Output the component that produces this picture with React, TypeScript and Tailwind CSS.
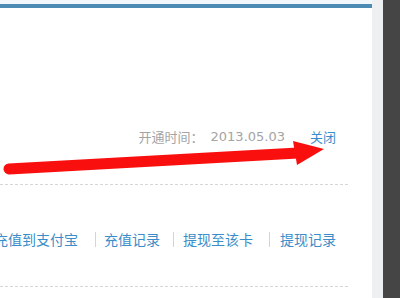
import React from 'react'

const cjk = '"Noto Sans CJK SC", sans-serif'

const links = [
  { label: '充值到支付宝', gap: '' },
  { label: '充值记录', gap: 'ml-[17px]' },
  { label: '提现至该卡', gap: 'ml-[13px]' },
  { label: '提现记录', gap: 'ml-[16px]' },
]

const after = ['ml-[8px]', 'ml-[9px]', 'ml-[10px]']

function Arrow() {
  return (
    <svg className="pointer-events-none absolute inset-0" width="400" height="298" viewBox="0 0 400 298" aria-hidden>
      <line x1="9" y1="169" x2="298" y2="153" stroke="#fa0f0f" strokeWidth="11" strokeLinecap="round" />
      <polygon points="293,141 324,149 297,165" fill="#fa0f0f" />
    </svg>
  )
}

export default function App() {
  return (
    <div className="relative flex h-[298px] w-[400px] overflow-hidden bg-white" style={{ fontFamily: cjk }}>
      <div className="flex w-[372px] flex-col">
        <div className="h-[4px] bg-[#f1f7fb]" />
        <div className="h-[4px] bg-[#4b8bb4]" />
        <div className="w-[348px]">
          <div className="h-[177px] border-b border-dashed border-[#d6d6d6] pt-[120px]">
            <div className="flex items-center justify-end pr-[12px] text-[13px] leading-[18px]">
              <span className="text-[#a4a4a4]">开通时间：</span>
              <span className="ml-[7px] text-[#a4a4a4]" style={{ fontFamily: '"DejaVu Sans", "Noto Sans CJK SC", sans-serif' }}>
                2013.05.03
              </span>
              <span className="ml-[25px] text-[#3a8dc8]">关闭</span>
            </div>
          </div>
          <div className="h-[102px] border-b border-dashed border-[#d6d6d6] pt-[44px]">
            <div className="ml-[-6px] flex items-center text-[14px] leading-[20px] text-[#3a8dc8]">
              {links.map((l, i) => (
                <React.Fragment key={l.label}>
                  {i > 0 ? <span className={`${l.gap} h-[15px] w-px bg-[#d4d4d4]`} /> : null}
                  <span className={i > 0 ? after[i - 1] : ''}>{l.label}</span>
                </React.Fragment>
              ))}
            </div>
          </div>
        </div>
      </div>
      <div className="w-[11px] bg-[#eeeff1]" />
      <div className="flex-1 bg-[#454545]" />
      <Arrow />
    </div>
  )
}
